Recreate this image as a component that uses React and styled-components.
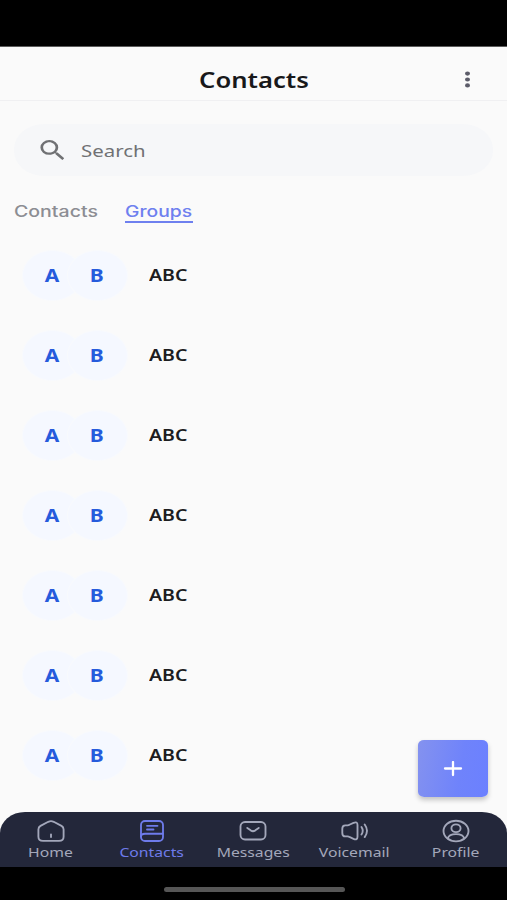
import React from "react";
import styled, { createGlobalStyle } from "styled-components";

const Global = createGlobalStyle`
  * { box-sizing: border-box; }
  body { margin: 0; background: #000; font-family: "Noto Sans", sans-serif; }
`;

const Screen = styled.div`
  position: relative;
  width: 507px;
  height: 900px;
  display: flex;
  flex-direction: column;
  overflow: hidden;
  background: #fafafa;
`;
const StatusBar = styled.div`
  height: 47px;
  flex: none;
  background: #000;
  border-bottom: 1px solid #5c5c5c;
`;
const Header = styled.header`
  height: 54px;
  flex: none;
  display: grid;
  grid-template-columns: 80px 1fr 79px;
  align-items: center;
  justify-items: center;
  padding-top: 12px;
  border-bottom: 1px solid #f0f0f2;
`;
const Wide = styled.span`
  display: inline-block;
  white-space: nowrap;
  transform: scaleX(${(p) => p.$x || 1.2});
  transform-origin: ${(p) => p.$from || "center"};
`;
const Title = styled.h1`
  grid-column: 2;
  margin: 0;
  font-size: 21px;
  line-height: 28px;
  font-weight: 600;
  color: #18181a;
`;
const MenuButton = styled.button`
  width: 24px;
  height: 24px;
  padding: 0;
  border: 0;
  background: none;
  display: flex;
`;
const SearchBox = styled.div`
  height: 52px;
  flex: none;
  margin: 23px 14px 0;
  padding-left: 26px;
  border-radius: 30px / 25px;
  background: #f6f7f9;
  display: flex;
  align-items: center;
  gap: 17px;
  color: #707174;
  font-size: 17px;
`;
const Tabs = styled.nav`
  height: 30px;
  flex: none;
  margin: 19px 14px 0;
  display: flex;
  align-items: flex-start;
  gap: 27px;
`;
const Tab = styled.div`
  width: ${(p) => p.$width}px;
  height: 28px;
  padding-top: 7px;
  font: 500 15.5px/19px Inter, sans-serif;
  color: ${(p) => (p.$active ? "#6e80ef" : "#8c8d93")};
  border-bottom: 2px solid ${(p) => (p.$active ? "#6e80ef" : "transparent")};
`;
const List = styled.main`
  flex: 1;
  min-height: 0;
  padding-top: 10px;
`;
const Row = styled.div`
  height: 80px;
  padding-left: 22px;
  display: flex;
  align-items: center;
`;
const Avatar = styled.div`
  width: 61px;
  height: 51px;
  margin-left: ${(p) => (p.$overlap ? -16 : 0)}px;
  padding-right: ${(p) => (p.$overlap ? 1 : 0)}px;
  border: 1px solid #f8fafd;
  border-radius: 50%;
  background: #f5f8ff;
  color: #265bdc;
  font-size: 17.5px;
  font-weight: 700;
  display: flex;
  align-items: center;
  justify-content: center;
`;
const GroupName = styled.div`
  margin-left: 21px;
  font-size: 16px;
  font-weight: 600;
  color: #1d1d1f;
`;
const AddButton = styled.button`
  position: absolute;
  left: 418px;
  top: 740px;
  width: 70px;
  height: 57px;
  padding: 0;
  border: 0;
  border-radius: 6px / 5px;
  background: linear-gradient(100deg, #8492ef 0%, #6f83fb 60%, #6b80ff 100%);
  box-shadow: 0 3px 5px rgba(0, 0, 0, 0.22);
  display: flex;
  align-items: center;
  justify-content: center;
`;
const BottomBar = styled.nav`
  height: 55px;
  flex: none;
  display: grid;
  grid-template-columns: repeat(5, 101.3px);
  border-radius: 25px 25px 0 0 / 21px 21px 0 0;
  background: #23273a;
`;
const NavItem = styled.div`
  display: flex;
  flex-direction: column;
  align-items: center;
  padding-top: 6px;
  color: ${(p) => (p.$active ? "#6e7bea" : "#a3a7ba")};
  font-size: 13px;
  line-height: 18px;
`;
const HomeBar = styled.div`
  height: 33px;
  flex: none;
  background: #000;
  display: flex;
  align-items: center;
  justify-content: center;
  padding: 12px 0 0 1px;
`;
const Handle = styled.div`
  width: 181px;
  height: 5px;
  border-radius: 3px;
  background: #565656;
`;
const NavIcon = styled.svg`
  width: 30px;
  height: 25px;
  flex: none;
  fill: none;
  stroke: currentColor;
  stroke-width: 1.85;
  stroke-linecap: round;
  stroke-linejoin: round;
`;

const items = [
  { label: "Home", art: <path d="M12.3 3.8q2.7-1.3 5.4 0l7.8 4.1q2.1 1.2 2.1 3.7v7.2q0 4.1-4.6 4.1H7q-4.6 0-4.6-4.1v-7.2q0-2.5 2.1-3.7zM15 16.3v2.8" /> },
  { label: "Contacts", art: <><rect x="4" y="3" width="22" height="20" rx="4" /><path d="M4 18.6q0-2.9 4-2.9h18M10 7.8h10.5M10 11.5h6.5" /></> },
  { label: "Messages", art: <><rect x="2.5" y="4" width="25" height="17.5" rx="4.5" /><path d="m9.3 9.9 3.7 2.7q2 1.3 4 0l3.7-2.7" /></> },
  { label: "Voicemail", art: <path d="M2.3 10.8q0-3.5 3-3.5h2.2q1.2 0 2.4-.8l3.6-1.6q4-1.8 4 2v11.9q0 3.8-4 2l-3.6-1.6q-1.2-.8-2.4-.8H5.3q-3 0-3-3.5zM21.5 9q2.5 3.8 0 7.6M24.7 6.5q4.6 6.3 0 12.6" /> },
  { label: "Profile", art: <><ellipse cx="15" cy="13" rx="12.5" ry="10.3" /><ellipse cx="15" cy="10.2" rx="4.6" ry="3.9" /><path d="M6.8 20.5q.8-4.4 8.2-4.4t8.2 4.4" /></> },
];

export default function App() {
  return (
    <>
      <Global />
      <Screen>
        <StatusBar />
        <Header>
          <Title><Wide $x={1.22}>Contacts</Wide></Title>
          <MenuButton aria-label="More">
            <svg width="24" height="24" fill="#5c5c69">
              <ellipse cx="11.5" cy="5.6" rx="2.5" ry="2.1" />
              <ellipse cx="11.5" cy="11.5" rx="2.5" ry="2.1" />
              <ellipse cx="11.5" cy="17.4" rx="2.5" ry="2.1" />
            </svg>
          </MenuButton>
        </Header>
        <SearchBox>
          <svg width="24" height="20" viewBox="2.7 3 17.5 17.5" preserveAspectRatio="none" fill="currentColor">
            <path d="M15.5 14h-.79l-.28-.27A6.47 6.47 0 0 0 16 9.5 6.5 6.5 0 1 0 9.5 16c1.61 0 3.09-.59 4.23-1.57l.27.28v.79l5 4.99L20.49 19zm-6 0C7.01 14 5 11.99 5 9.5S7.01 5 9.5 5 14 7.01 14 9.5 11.99 14 9.5 14" />
          </svg>
          <Wide $from="left">Search</Wide>
        </SearchBox>
        <Tabs>
          <Tab $width={84}><Wide $x={1.26} $from="left">Contacts</Wide></Tab>
          <Tab $width={68} $active><Wide $x={1.245} $from="left">Groups</Wide></Tab>
        </Tabs>
        <List>
          {Array.from({ length: 7 }, (_, i) => (
            <Row key={i}>
              <Avatar><Wide>A</Wide></Avatar>
              <Avatar $overlap><Wide>B</Wide></Avatar>
              <GroupName><Wide $x={1.22} $from="left">ABC</Wide></GroupName>
            </Row>
          ))}
        </List>
        <AddButton aria-label="Add">
          <svg width="20" height="16" stroke="#fff" strokeWidth="2.3" strokeLinecap="round">
            <path d="M2 7.5h16M10 1v13" />
          </svg>
        </AddButton>
        <BottomBar>
          {items.map(({ label, art }) => (
            <NavItem key={label} $active={label === "Contacts"}>
              <NavIcon viewBox="0 0 30 25">{art}</NavIcon>
              <Wide $x={1.21}>{label}</Wide>
            </NavItem>
          ))}
        </BottomBar>
        <HomeBar><Handle /></HomeBar>
      </Screen>
    </>
  );
}
